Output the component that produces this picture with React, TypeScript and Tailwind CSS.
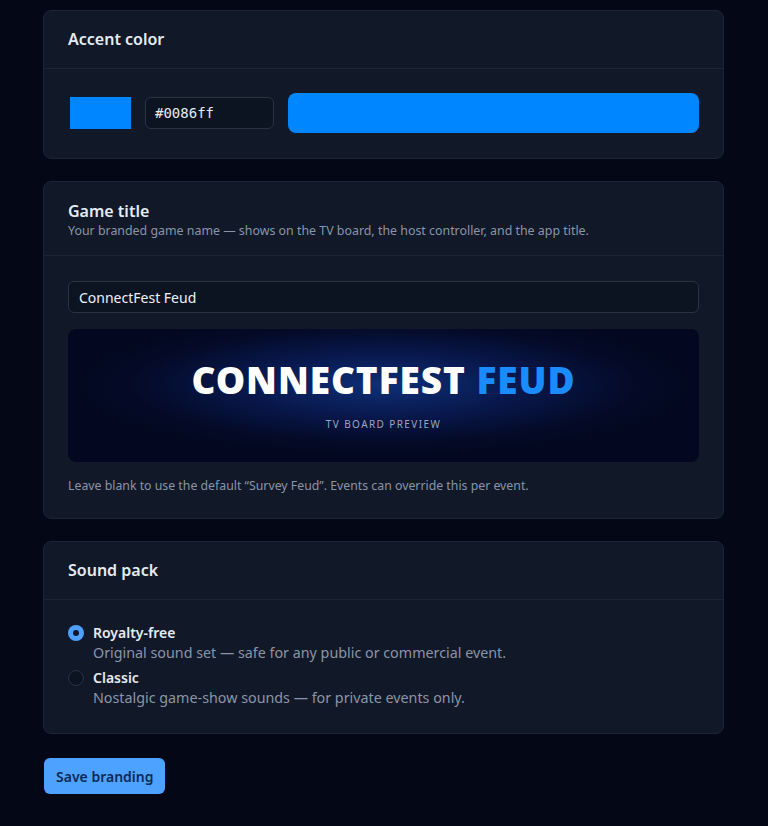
import { useState } from "react";

const font = { fontFamily: "'Noto Sans', 'Open Sans', sans-serif" };

function Card({ title, subtitle, children }: { title: string; subtitle?: string; children: React.ReactNode }) {
  return (
    <section className="rounded-lg border border-[#1c2435] bg-[#111827]">
      <header className={`border-b border-[#1c2435] px-6 ${subtitle ? "pt-[19px] pb-[16px]" : "pt-[18px] pb-[19px]"}`}>
        <h2 className="text-[16px] font-semibold leading-5 text-[#e6ebf3]">{title}</h2>
        {subtitle && <p className="mt-[2px] text-[12.4px] leading-4 text-[#8b95a7]">{subtitle}</p>}
      </header>
      {children}
    </section>
  );
}

export default function App() {
  const [accent, setAccent] = useState("#0086ff");
  const [title, setTitle] = useState("ConnectFest Feud");
  const [pack, setPack] = useState("royalty");

  const words = title.trim().split(" ");
  const last = words.length > 1 ? words.pop() : "";
  const first = words.join(" ");

  return (
    <div className="min-h-[826px] bg-[#040716] px-[43px] pt-[10px] pb-8" style={font}>
      <div className="flex w-[681px] flex-col gap-[22px]">
        <Card title="Accent color">
          <div className="flex items-center gap-[14px] pt-6 pr-6 pb-[25px] pl-[26px]">
            <div className="h-[32px] w-[61px]" style={{ background: accent }} />
            <input
              value={accent}
              onChange={(e) => setAccent(e.target.value)}
              className="h-[32px] w-[129px] rounded-md border border-[#2a3342] bg-[#0d1421] px-[9px] text-[14px] text-[#e6ebf3] outline-none"
              style={{ fontFamily: "'DejaVu Sans Mono', monospace" }}
            />
            <div className="h-[40px] flex-1 rounded-lg" style={{ background: accent }} />
          </div>
        </Card>

        <Card
          title="Game title"
          subtitle="Your branded game name — shows on the TV board, the host controller, and the app title."
        >
          <div className="px-6 pt-[25px] pb-[23px]">
            <input
              value={title}
              onChange={(e) => setTitle(e.target.value)}
              className="h-[32px] w-full rounded-md border border-[#2a3342] bg-[#0d1421] px-[10px] text-[14px] text-[#eef2f7] outline-none"
            />
            <div className="mt-4 flex h-[133px] flex-col items-center justify-center rounded-lg bg-[radial-gradient(ellipse_50%_55%_at_50%_42%,#0e2f78_0%,#08174a_45%,#040a26_80%,#030820_100%)]">
              <div className="mt-[2px] text-[37px] font-black uppercase leading-none tracking-[0.025em] text-white">
                {first} <span className="text-[#1a8cff]">{last}</span>
              </div>
              <div className="mt-[19px] text-[10px] uppercase tracking-[0.14em] text-[#9aa6bd]">TV board preview</div>
            </div>
            <p className="mt-[15px] text-[12.3px] leading-[18px] text-[#8b95a7]">
              Leave blank to use the default “Survey Feud”. Events can override this per event.
            </p>
          </div>
        </Card>

        <Card title="Sound pack">
          <div className="flex flex-col gap-[5px] px-6 pt-[23px] pb-[25px]">
            {[
              { id: "royalty", label: "Royalty-free", desc: "Original sound set — safe for any public or commercial event." },
              { id: "classic", label: "Classic", desc: "Nostalgic game-show sounds — for private events only." },
            ].map((o) => (
              <label key={o.id} className="flex cursor-pointer items-start gap-[9px]" onClick={() => setPack(o.id)}>
                <span
                  className={`mt-[2px] flex h-[16px] w-[16px] shrink-0 items-center justify-center rounded-full ${
                    pack === o.id ? "bg-[#4e9fff]" : "border border-[#2a3342] bg-[#0d1421]"
                  }`}
                >
                  {pack === o.id && <span className="h-[6px] w-[6px] rounded-full bg-[#0b1830]" />}
                </span>
                <span className="flex flex-col">
                  <span className="text-[14px] font-semibold leading-5 text-[#e6ebf3]">{o.label}</span>
                  <span className="text-[14.3px] leading-5 text-[#8b95a7]">{o.desc}</span>
                </span>
              </label>
            ))}
          </div>
        </Card>

        <div className="pt-[2px] pl-px">
          <button className="h-[36px] rounded-md bg-[#4ea2ff] px-3 text-[14px] font-semibold text-[#0c2a57]">Save branding</button>
        </div>
      </div>
    </div>
  );
}
